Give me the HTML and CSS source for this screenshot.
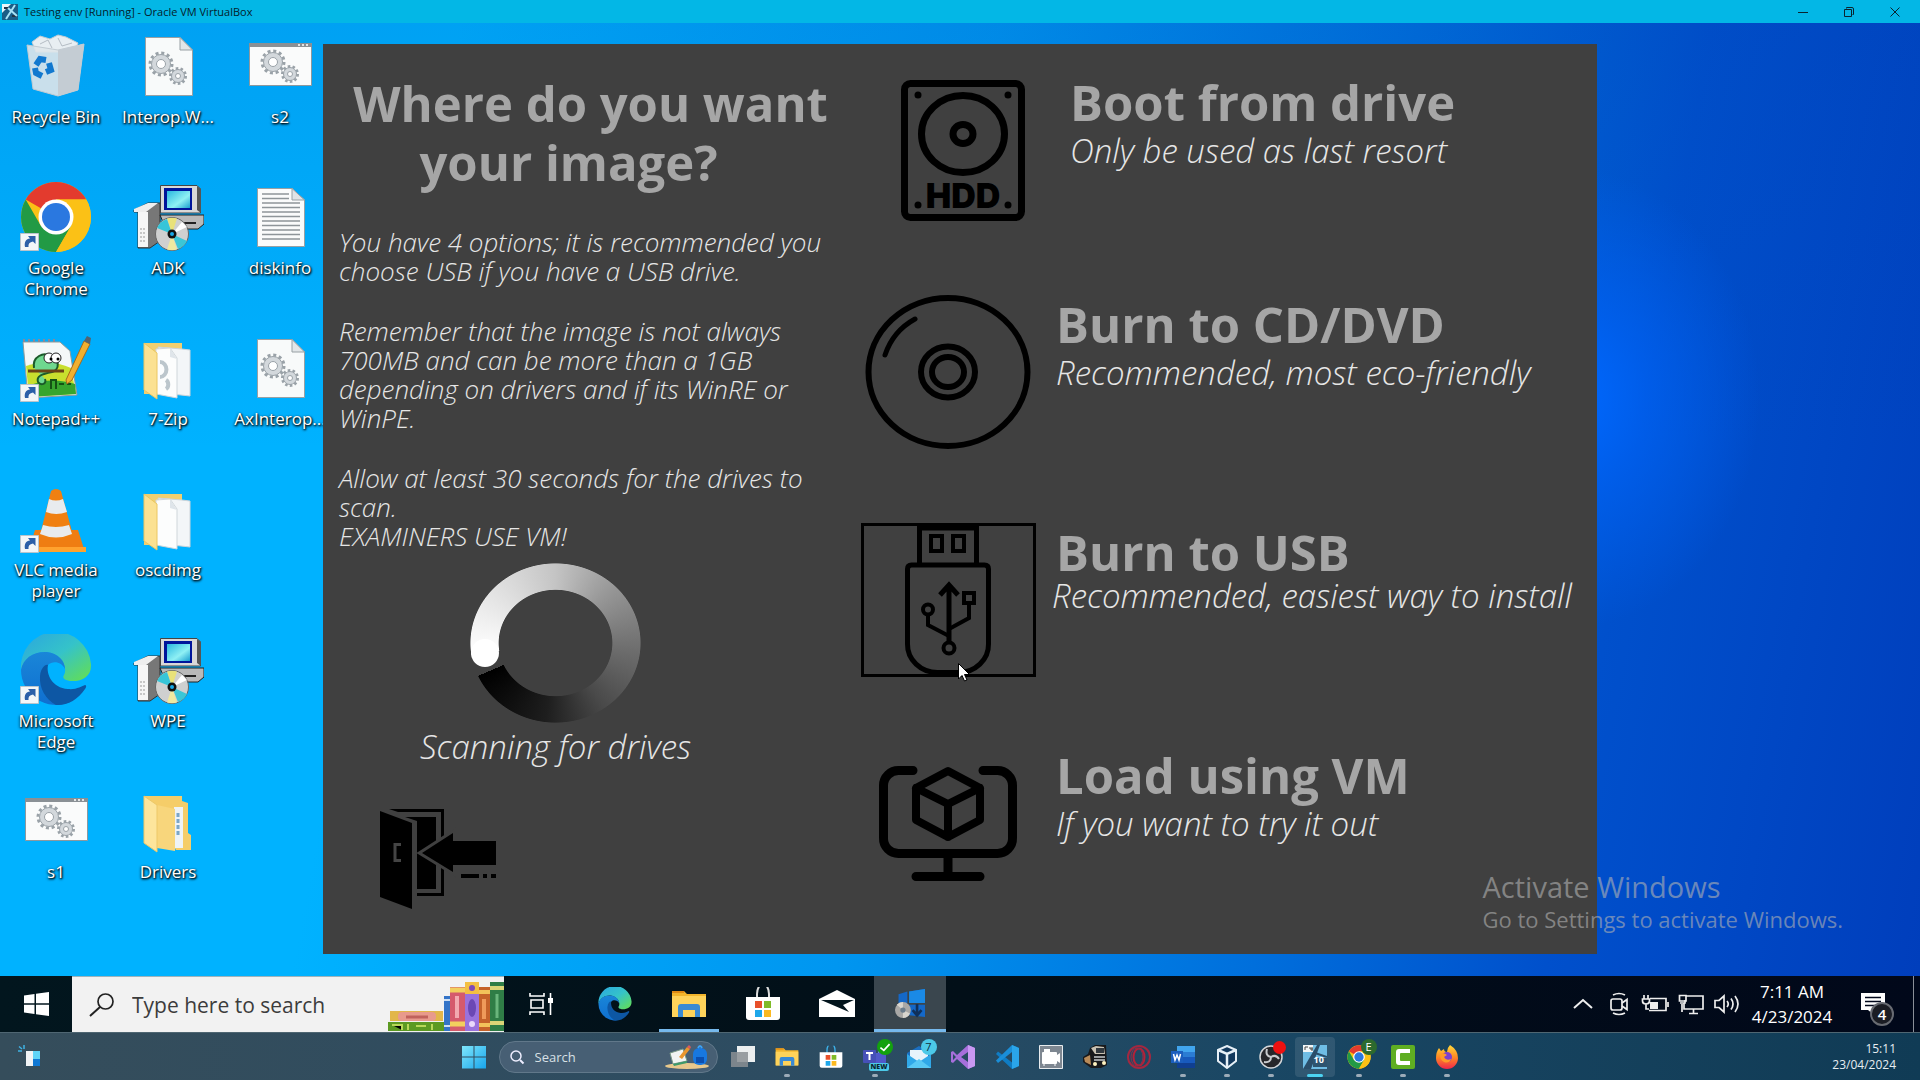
FILE: index.html
```html
<!DOCTYPE html>
<html lang="en">
<head>
<meta charset="utf-8">
<title>Testing env [Running] - Oracle VM VirtualBox</title>
<link rel="stylesheet" href="styles.css">
</head>
<body>
<svg class="defs" aria-hidden="true">
  <defs>
    <linearGradient id="edgeTop" x1="0" y1="0" x2="1" y2="1"><stop offset="0" stop-color="#2aa5e0"/><stop offset=".5" stop-color="#35c3c9"/><stop offset="1" stop-color="#66e04c"/></linearGradient>
    <linearGradient id="edgeMid" x1="0" y1="0" x2="0" y2="1"><stop offset="0" stop-color="#1a86d8"/><stop offset="1" stop-color="#0f6fd0"/></linearGradient>
    <linearGradient id="screen" x1="0" y1="0" x2="1" y2="1"><stop offset="0" stop-color="#29b8e0"/><stop offset=".6" stop-color="#8ff0f4"/><stop offset="1" stop-color="#1a9fd0"/></linearGradient>
    <linearGradient id="win11" x1="0" y1="0" x2="1" y2="1"><stop offset="0" stop-color="#7fe6fb"/><stop offset="1" stop-color="#18a5ec"/></linearGradient>
    <linearGradient id="fire" x1="0" y1="0" x2="0" y2="1"><stop offset="0" stop-color="#ffd83a"/><stop offset=".5" stop-color="#ff8a24"/><stop offset="1" stop-color="#f0264c"/></linearGradient>
  </defs>
  <symbol id="gears" viewBox="0 0 40 34">
    <circle cx="13" cy="13" r="11" fill="none" stroke="#9aa2a8" stroke-width="3" stroke-dasharray="3 2.75"/>
    <circle cx="13" cy="13" r="9.5" fill="#d3d8dc" stroke="#9aa2a8"/>
    <circle cx="13" cy="13" r="4.5" fill="#fff" stroke="#9aa2a8"/>
    <circle cx="30" cy="25" r="7.500" fill="none" stroke="#9aa2a8" stroke-width="3" stroke-dasharray="2.500 2.200"/>
    <circle cx="30" cy="25" r="6.5" fill="#d3d8dc" stroke="#9aa2a8"/>
    <circle cx="30" cy="25" r="2.500" fill="#fff" stroke="#9aa2a8"/>
  </symbol>
  <symbol id="dll" viewBox="0 0 72 72">
    <path d="M13.500 7.500H48L60.500 20V65.500H13.500z" fill="#f8fafa" stroke="#98a0a4"/>
    <path d="M48 7.500V20H60.500z" fill="#e2e6e8" stroke="#98a0a4"/>
    <use href="#gears" x="16" y="21" width="40" height="34"/>
  </symbol>
  <symbol id="script" viewBox="0 0 72 72">
    <path d="M5.500 13.500H67.500V55.500H5.500z" fill="#fafbfb" stroke="#8d989e"/>
    <path d="M5 13H68V17H5z" fill="#8a9095"/><path d="M54 15h2m2 0h2m2 0h2" stroke="#fff" stroke-width="1.500"/>
    <use href="#gears" x="16" y="19" width="40" height="34"/>
  </symbol>
  <symbol id="textfile" viewBox="0 0 72 72">
    <path d="M13.500 7.500H48L60.500 19V65.500H13.500z" fill="#fafbfb" stroke="#98a0a4"/>
    <path d="M48 7.500V19H60.500z" fill="#dfe3e6" stroke="#98a0a4"/>
    <path d="M18 13h27M18 17.500h27M18 22h38M18 26.500h38M18 31h38M18 35.500h38M18 40h38M18 44.500h38M18 49h38M18 53.500h38M18 58h38" stroke="#8e9599" stroke-width="1.300"/>
  </symbol>
  <symbol id="installer" viewBox="0 0 72 72">
    <path d="M2 29L16 22H28V60L18 67H6V31H2z" fill="#777" stroke="#333"/>
    <path d="M2 28L16 22H26L14 31H2z" fill="#eee"/><path d="M6 31H16V66H6z" fill="#f6f6f6"/>
    <path d="M8 48h6M8 52h6M8 56h6M8 60h6" stroke="#999" stroke-dasharray="2 1"/>
    <path d="M28 34H72V43L66 48H34z" fill="#b9b9b9" stroke="#222"/><path d="M48 42H64" stroke="#222" stroke-width="2"/>
    <path d="M28.500 4.500H65L68.500 8V32H28.500z" fill="#d8d8d8" stroke="#444"/><path d="M65 5L69 8V32L65 29z" fill="#555"/>
    <path d="M32 7H60V29H32z" fill="#00149a"/><path d="M35 10H58V27H35z" fill="url(#screen)"/>
    <circle cx="40" cy="53" r="16.500" fill="#cfd0d0" stroke="#666"/>
    <path d="M40 53L35 37.500A16 16 0 0 1 45 37.500z" fill="#e9e27a"/><path d="M40 53L25 47A16 16 0 0 1 35 38z" fill="#37c5d8"/>
    <path d="M40 53L45 68.500A16 16 0 0 1 35 68.500z" fill="#efe9a0"/><path d="M40 53L55 60A16 16 0 0 1 46 68z" fill="#3cc6d6"/>
    <path d="M40 53L50 41 55 46z" fill="#fff"/><circle cx="40" cy="53" r="4.500" fill="#111"/><circle cx="40" cy="53" r="2" fill="#18a8e8"/>
  </symbol>
  <symbol id="folder" viewBox="0 0 72 72">
    <path d="M12 11H50V62H12z" fill="#f0cf70"/>
    <path d="M26 15L50 17 58 18V64L40 62z" fill="#f3f6f8" stroke="#ccd4da"/>
    <path d="M24 17L38 16 45 26V66L24 62z" fill="#fcfdfd" stroke="#d0d6da"/>
    <path d="M38 16V25L45 27z" fill="#dfe5ea"/>
    <path d="M12 11L25 21V67L12 58z" fill="#fbe192" stroke="#eac662"/>
  </symbol>
  <symbol id="shortcut" viewBox="0 0 72 72">
    <path d="M.5 52.500H18.500V69.500H.5z" fill="#f3f6f8" stroke="#b9c4cc"/>
    <path d="M5 66C4 61 6 58 10 57.500L8 55H15.500V63L13 60.500C9.500 61 8 63 8.500 66z" fill="#2b5fa8"/>
  </symbol>
  <symbol id="chrome" viewBox="0 0 72 72">
    <circle cx="36" cy="36" r="35" fill="#fbc116"/>
    <path d="M36 36L5.700 18.500A35 35 0 0 1 66.300 18.500H36z" fill="#e33b2e"/>
    <path d="M5.700 18.500A35 35 0 0 0 36 71L51.200 44.800 20.800 44.800z" fill="#229a45"/>
    <path d="M66.300 18.500H36L51.200 44.800 36 71A35 35 0 0 0 66.300 18.500z" fill="#fbc116"/>
    <circle cx="36" cy="36" r="17.500" fill="#fff"/><circle cx="36" cy="36" r="14" fill="#2a78e0"/>
  </symbol>
  <symbol id="edge" viewBox="0 0 72 72">
    <path d="M1 36A35 35 0 0 1 71 30C72 42 62 48 50 47C44 46 42 44 44 41C48 34 42 20 27 18C15 17 4 24 1 36z" fill="url(#edgeTop)"/>
    <path d="M1 36C3 24 14 17 27 18C38 19 45 27 45 35C42 28 33 26 28 31C22 38 25 57 41 66C45 68 50 69 50 68A35 35 0 0 1 1 36z" fill="url(#edgeMid)"/>
    <path d="M20 42C21 34 25 30 28 31C26 40 32 54 48 55C56 56 62 52 65 51C67 51 66 54 65 55C58 66 46 72 36 71C26 66 19 54 20 42z" fill="#0d57a4"/>
  </symbol>
  <symbol id="explorer" viewBox="0 0 36 30">
    <path d="M1 2H13L16 5H35V27H1z" fill="#f3b52c"/><path d="M1 7H35V28H1z" fill="#ffd35a"/><path d="M1 2H13V4H1z" fill="#e08a14"/>
    <path d="M7 28V18Q7 15 10 15H26Q29 15 29 18V28H24V21H12V28z" fill="#3a8ad4"/>
  </symbol>
  <symbol id="bag" viewBox="0 0 36 34">
    <path d="M12 12V7a3 5 0 0 1 12 0V12" fill="none" stroke="currentColor" stroke-width="2"/>
    <path d="M1 10H35V30Q35 33 32 33H4Q1 33 1 30z" fill="#fff"/>
    <path d="M10 14H17V21H10z" fill="#e8502a"/><path d="M19 14H26V21H19z" fill="#80bb28"/><path d="M10 23H17V30H10z" fill="#1ea7ea"/><path d="M19 23H26V30H19z" fill="#fbb920"/>
  </symbol>
</svg>

<header class="titlebar">
  <svg class="titlebar-icon" viewBox="0 0 16 16"><path d="M0 0H16V16H0z" fill="#1a5d86"/><path d="M0 0H9L0 9z" fill="#e9f4f8"/><path d="M2 4h5M10 12h5" stroke="#234" stroke-width="2"/><path d="M4 15L13 1M6 4l9 8" stroke="#a8e2f5" stroke-width="2"/></svg>
  <h2 class="titlebar-text">Testing env [Running] - Oracle VM VirtualBox</h2>
  <div class="window-controls">
    <button aria-label="Minimize"><svg viewBox="0 0 12 12"><path d="M1 6.500H11"/></svg></button>
    <button aria-label="Restore"><svg viewBox="0 0 12 12"><path d="M3.500 2.500V1.500H9Q10.500 1.500 10.500 3V8.500H9.500M1.500 3.500H8.500V10.500H1.500z"/></svg></button>
    <button aria-label="Close"><svg viewBox="0 0 12 12"><path d="M1.500 1.500L10.500 10.500M10.500 1.500L1.500 10.500"/></svg></button>
  </div>
</header>

<main class="desktop">
  <nav class="shortcuts" aria-label="Desktop icons">
    <button class="shortcut"><svg viewBox="0 0 72 72"><path d="M12 12L20 6 30 9 38 5 46 7 58 13 54 22H16z" fill="#e8eef2" stroke="#c4ccd2"/><path d="M20 14L28 10 32 18M38 8L42 16 52 13" stroke="#b4bcc4" fill="none"/><path d="M7 15L38 20 64 14 58 60 38 66 13 59z" fill="#dfe5ea" fill-opacity=".9" stroke="#c2cbd2"/><path d="M38 20L64 14 58 60 38 66z" fill="#c4ccd3"/><path d="M16 35L20 29 26 30M29 33L31 40 26 42M22 46L16 43 15 38" fill="none" stroke="#1279cf" stroke-width="6"/></svg><span>Recycle Bin</span></button>
    <button class="shortcut"><svg viewBox="0 0 72 72"><use href="#chrome"/><use href="#shortcut"/></svg><span>Google Chrome</span></button>
    <button class="shortcut"><svg viewBox="0 0 72 72"><path d="M3 10H40L50 19 57 63 8 66z" fill="#f4f8f8" stroke="#8e9a9a"/><path d="M6 34Q30 26 51 36L56 62 9 65z" fill="#c8df2e"/><path d="M8 54Q30 44 55 52L56 62 9 65z" fill="#37a52e"/><path d="M4 10v-3M9 10v-3M14 10v-3M19 10v-3M24 10v-3M29 10v-3M34 10v-3" stroke="#889" stroke-width="2"/><path d="M14 36C12 24 24 20 30 24C40 26 40 38 32 40C22 42 16 44 18 50C21 54 27 52 25 47" fill="#6fd88f" stroke="#1b5a2a" stroke-width="2"/><circle cx="29" cy="26" r="5" fill="#fff" stroke="#222"/><circle cx="36" cy="26" r="5" fill="#fff" stroke="#222"/><circle cx="31" cy="27" r="1.500"/><circle cx="38" cy="27" r="1.500"/><path d="M8 39H44" stroke="#6b4316" stroke-width="3"/><path d="M31 57v-9h5v9M39 52h5m3 0h4" fill="none" stroke="#145214" stroke-width="2"/><path d="M46 48L64 9 70 12 52 48 47 52z" fill="#f0b030" stroke="#a8691a"/><path d="M64 9L67 4 71 6 70 12z" fill="#54636f"/><use href="#shortcut"/></svg><span>Notepad++</span></button>
    <button class="shortcut"><svg viewBox="0 0 72 72"><path d="M15 47H58L65 69H8z" fill="#ef7d12"/><path d="M8 64H66V69H8z" fill="#ffa22e"/><path d="M31 8Q36 4 41 8L53 52Q36 60 20 52z" fill="#f08012"/><path d="M29 16Q36 19 43 16L47 29Q36 33 26 29zM23 42Q36 46 49 42L52 51Q36 58 20 51z" fill="#e8ebee"/><use href="#shortcut"/></svg><span>VLC media player</span></button>
    <button class="shortcut"><svg viewBox="0 0 72 72"><use href="#edge"/><use href="#shortcut"/></svg><span>Microsoft Edge</span></button>
    <button class="shortcut"><svg viewBox="0 0 72 72"><use href="#script"/></svg><span>s1</span></button>
    <button class="shortcut"><svg viewBox="0 0 72 72"><use href="#dll"/></svg><span>Interop.W...</span></button>
    <button class="shortcut"><svg viewBox="0 0 72 72"><use href="#installer"/></svg><span>ADK</span></button>
    <button class="shortcut"><svg viewBox="0 0 72 72"><use href="#folder"/><path d="M28 30a6 7 0 0 1 0 15M34 48a4 5 0 0 1 0 9" fill="none" stroke="#bcc6cc" stroke-width="4"/></svg><span>7-Zip</span></button>
    <button class="shortcut"><svg viewBox="0 0 72 72"><use href="#folder"/></svg><span>oscdimg</span></button>
    <button class="shortcut"><svg viewBox="0 0 72 72"><use href="#installer"/></svg><span>WPE</span></button>
    <button class="shortcut"><svg viewBox="0 0 72 72"><path d="M12 11H50V16L56 18V48L59 50V65H44z" fill="#f5cd69"/><path d="M42 22H51V63H42z" fill="#eef3f7"/><path d="M46 28v24" stroke="#7ba6c8" stroke-width="3" stroke-dasharray="4 2"/><path d="M25 20L43 24V66L25 63z" fill="#f8d67c"/><path d="M12 11L25 20V67L12 58z" fill="#fde59c" stroke="#edc868"/></svg><span>Drivers</span></button>
    <button class="shortcut"><svg viewBox="0 0 72 72"><use href="#script"/></svg><span>s2</span></button>
    <button class="shortcut"><svg viewBox="0 0 72 72"><use href="#textfile"/></svg><span>diskinfo</span></button>
    <button class="shortcut"><svg viewBox="0 0 72 72"><use href="#dll"/></svg><span>AxInterop...</span></button>
  </nav>

  <section class="wizard">
    <div class="intro">
      <h1>Where do you want<span>your image?</span></h1>
      <div class="notes">
        <p>You have 4 options; it is recommended you choose USB if you have a USB drive.</p>
        <p>Remember that the image is not always 700MB and can be more than a 1GB depending on drivers and if its WinRE or WinPE.</p>
        <p>Allow at least 30 seconds for the drives to scan.<br>EXAMINERS USE VM!</p>
      </div>
      <div class="scan" role="status">
        <div class="spinner"></div>
        <p>Scanning for drives</p>
      </div>
      <button class="exit" aria-label="Exit">
        <svg viewBox="0 0 116 100">
          <path d="M9 0H64V87H37V84H61V3H18z"/><path d="M25 8H56V80H37V12z"/>
          <path d="M0 2L32 14V100L0 88z"/><path d="M21 35.500H15V51.500H21" fill="none" stroke="#444" stroke-width="3"/>
          <path d="M42 44L73 24V32H116V56H73V63z" stroke="#404040" stroke-width="6"/><path d="M42 44L73 24V32H116V56H73V63z"/>
          <path d="M81 67H99M103 67H107M111 67H116" stroke="#000" stroke-width="4"/>
        </svg>
      </button>
    </div>
    <div class="options">
      <button class="option option-drive">
        <svg class="option-icon" viewBox="0 0 175 154"><g fill="none" stroke="#000" stroke-width="7"><rect x="29.500" y="10.500" width="117" height="134" rx="6"/><ellipse cx="88" cy="61" rx="41.500" ry="38.500"/><ellipse cx="88" cy="61" rx="10" ry="9.500"/></g><circle cx="43" cy="22" r="3.500"/><circle cx="133" cy="22" r="3.500"/><circle cx="43" cy="132" r="3.500"/><circle cx="133" cy="132" r="3.500"/><text x="88" y="135" class="hdd-text">HDD</text></svg>
        <span class="option-text"><strong>Boot from drive</strong><em>Only be used as last resort</em></span>
      </button>
      <button class="option">
        <svg class="option-icon" viewBox="0 0 175 154"><g fill="none" stroke="#000" stroke-width="6"><ellipse cx="87" cy="77" rx="79.500" ry="74"/><ellipse cx="87" cy="77" rx="27" ry="25.500"/><ellipse cx="87" cy="77" rx="16" ry="15"/><path d="M24 60Q32 36 54 24" stroke-width="5" stroke-linecap="round"/></g></svg>
        <span class="option-text"><strong>Burn to CD/DVD</strong><em>Recommended, most eco-friendly</em></span>
      </button>
      <button class="option option-usb">
        <svg class="option-icon option-icon-focus" viewBox="0 0 175 154"><g fill="none" stroke="#000" stroke-width="5"><path d="M58.500 42V5H115.500V42"/><path d="M46.500 46Q46.500 42 50.500 42H123.500Q127.500 42 127.500 46V121A30 28 0 0 1 97.500 149.500H76.500A30 28 0 0 1 46.500 121z"/><g stroke-width="4"><path d="M70 13H81V28H70zM92 13H103V28H92z"/><path d="M88 62V119M79 72L88 62 97 72" stroke-width="5"/><circle cx="88" cy="125" r="5.500"/><circle cx="67" cy="86.500" r="5"/><path d="M67 92V102L88 113M108 81V95L88 106M103 70H113V80H103z"/></g></g></svg>
        <span class="option-text"><strong>Burn to USB</strong><em>Recommended, easiest way to install</em></span>
        <svg class="cursor" viewBox="0 0 12 19"><path d="M.5.5V16L4 12.500 6.500 18 9 17 6.500 11.500H11.500z" fill="#fff" stroke="#000"/></svg>
      </button>
      <button class="option">
        <svg class="option-icon" viewBox="0 0 175 154"><g fill="none" stroke="#000" stroke-width="9" stroke-linecap="round"><path d="M52 24.500H38A15 15 0 0 0 22.500 39.500V92A15 15 0 0 0 38 107.500H136A15 15 0 0 0 151.500 92V39.500A15 15 0 0 0 136 24.500H122M87 108V130M55 130.500H119"/><path d="M87 25L119 42V74L87 91 55 74V42zM55 42L87 58 119 42M87 58V91" stroke-width="8" stroke-linejoin="round"/></g></svg>
        <span class="option-text"><strong>Load using VM</strong><em>If you want to try it out</em></span>
      </button>
    </div>
  </section>

  <aside class="watermark"><p class="watermark-title">Activate Windows</p><p class="watermark-body">Go to Settings to activate Windows.</p></aside>
</main>

<nav class="guest-bar" aria-label="Guest taskbar">
  <button class="guest-start" aria-label="Start"><svg viewBox="0 0 25 24"><path d="M0 3.500L10.500 2V11.300H0zM12 1.800L25 0V11.300H12zM0 12.700H10.500V22L0 20.500zM12 12.700H25V24L12 22.200z" fill="#fff"/></svg></button>
  <div class="guest-search">
    <svg class="guest-lens" viewBox="0 0 26 24"><circle cx="16.500" cy="8.500" r="7.500" fill="none" stroke="#222" stroke-width="1.700"/><path d="M11 14L1 23" stroke="#222" stroke-width="2"/></svg>
    <input type="text" placeholder="Type here to search" aria-label="Type here to search">
    <svg class="books" viewBox="0 0 116 50">
      <path d="M0 40H56V49H0z" fill="#5c9a22"/><path d="M4 43h10v5M20 42v6M28 44h10M44 42v6" stroke="#b8d858" stroke-width="2"/>
      <path d="M2 29H55V39H2z" fill="#e2b64a"/><rect x="10" y="30" width="38" height="9" rx="4" fill="#e89a8c"/><path d="M18 35H40" stroke="#c0625c" stroke-width="3"/>
      <path d="M56 14H62V49H56z" fill="#3474c8"/><path d="M56 18h6M56 44h6" stroke="#cfe0f4" stroke-width="2"/>
      <path d="M62 5H77V49H62z" fill="#d55a6c"/><path d="M62 8h15M62 42h15" stroke="#f2cf5e" stroke-width="5"/><path d="M67 14h4v22h-4z" fill="#f2a9b0"/>
      <path d="M77 0H91V49H77z" fill="#9a72dc"/><path d="M77 0H91V12H77z" fill="#f4bf42"/><circle cx="84" cy="6" r="3" fill="#7f4aba"/><ellipse cx="84" cy="26" rx="4" ry="9" fill="#6b48b4"/><circle cx="84" cy="42" r="3" fill="#e9d8fa"/>
      <path d="M91 5H102V49H91z" fill="#c5622a"/><path d="M91 10h11M91 43h11" stroke="#f2c25a" stroke-width="4"/><path d="M96 17v20" stroke="#ef9a5a" stroke-width="4"/>
      <path d="M102 0H116V49H102z" fill="#2f7d46"/><path d="M102 6h14M102 41h14" stroke="#dbd477" stroke-width="4"/><path d="M109 12v24" stroke="#6ab67c" stroke-width="3"/>
    </svg>
  </div>
  <div class="guest-apps">
    <button aria-label="Task View"><svg class="ic-26" viewBox="0 0 26 24"><g fill="none" stroke="#fff" stroke-width="1.600"><path d="M2 1V4H16V1M3 8H15V16H3zM2 23V20H16V23M22.500 1V23"/></g><path d="M20 6H25V11H20z" fill="#fff"/></svg></button>
    <button aria-label="Edge"><svg class="ic-36" viewBox="0 0 72 72"><use href="#edge"/></svg></button>
    <button class="is-open" aria-label="File Explorer"><svg class="ic-36" viewBox="0 0 36 30"><use href="#explorer"/></svg></button>
    <button class="ic-white" aria-label="Store"><svg class="ic-36" viewBox="0 0 36 34"><use href="#bag"/></svg></button>
    <button aria-label="Mail"><svg class="ic-36" viewBox="0 0 36 30"><path d="M0 10L18 1 36 10V28H0z" fill="#fff"/><path d="M2 11H35L24 16 30 23 2 11z" fill="#02141c"/></svg></button>
    <button class="is-active" aria-label="Image builder"><svg class="ic-32" viewBox="0 0 36 34"><path d="M5 7L15 4V17H5zM17 4L35 1V17H17zM5 19H15V32L5 30zM17 19H35V33L17 31z" fill="#1468c8"/><path d="M17 4L35 1V17H17z" fill="#1a8ae6"/><circle cx="10" cy="25" r="9" fill="#a9a8a6"/><path d="M10 25L3 19A9 9 0 0 1 10 16zM10 25L18 29A9 9 0 0 1 10 34z" fill="#d8d5ce"/><circle cx="10" cy="25" r="3" fill="#6a7c8c"/><path d="M26 18V30M21 25L26 31 31 25" fill="none" stroke="#10305a" stroke-width="3"/></svg></button>
  </div>
  <div class="guest-tray">
    <button aria-label="Show hidden icons"><svg viewBox="0 0 28 24"><path d="M5 16L14 8 23 16" fill="none" stroke="#eee" stroke-width="2"/></svg></button>
    <button aria-label="Meet Now"><svg viewBox="0 0 28 24"><g fill="none" stroke="#eee" stroke-width="1.700"><path d="M8 3Q14 0 20 3M8 21Q14 24 20 21"/><rect x="6" y="7" width="11" height="11" rx="2"/><path d="M17 11L22 7.500V17.500L17 14"/></g></svg></button>
    <button aria-label="Battery"><svg viewBox="0 0 28 24"><g fill="none" stroke="#eee" stroke-width="1.700"><path d="M9 6.500H25V18.500H8M27 10V15M3 3V7M7 3V7M1.500 7H8.500V9Q8.500 12 5 12Q1.500 12 1.500 9zM5 12V17H8"/></g><path d="M9 10H17V17H9z" fill="#eee"/></svg></button>
    <button aria-label="Network"><svg viewBox="0 0 28 24"><g fill="none" stroke="#eee" stroke-width="1.700"><path d="M9 4H26V17H7V11M12 21.500H21M16.500 17V21M3 11H8V8M2.500 3.500H9V9H2.500zM5 12V20"/></g></svg></button>
    <button aria-label="Volume"><svg viewBox="0 0 28 24"><g fill="none" stroke="#eee" stroke-width="1.700"><path d="M2 8.500H6L11 4V20L6 15.500H2zM14 9Q16.500 12 14 15M18 6.500Q22 12 18 17.500M22 4Q28 12 22 20"/></g></svg></button>
    <button class="guest-clock"><span>7:11 AM</span><span>4/23/2024</span></button>
    <button class="notifications" aria-label="Notifications"><svg viewBox="0 0 24 22"><path d="M0 0H24V17H13V22L7 17H0z" fill="#fff"/><path d="M4 4.500H20M4 8.500H20M4 12.500H14" stroke="#02081c" stroke-width="1.500"/></svg><span class="count">4</span></button>
    <span class="peek"></span>
  </div>
</nav>

<nav class="host-bar" aria-label="Host taskbar">
  <div class="host-left"><button class="host-app" aria-label="Widgets"><svg viewBox="0 0 24 24"><path d="M8 6H15V21H8z" fill="#f0f3f5"/><path d="M15 6H22V14H15z" fill="#5fd4f7"/><path d="M15 14H22V21H15z" fill="#0f78d4"/><path d="M6 0V4M0 6H4M1 1.500L4 4" stroke="#3fb2e4" stroke-width="1.500"/></svg></button></div>
  <div class="host-center">
    <button class="host-app" aria-label="Start"><svg viewBox="0 0 24 24"><path d="M0 1H11.500V11.500H0zM12.500 1H24V11.500H12.500zM0 12.500H11.500V23.500H0zM12.500 12.500H24V23.500H12.500z" fill="url(#win11)"/></svg></button>
    <div class="host-search">
      <svg class="host-lens" viewBox="0 0 16 16"><circle cx="7" cy="7" r="5" fill="none" stroke="#eef" stroke-width="1.500"/><path d="M11 11L14.500 14.500" stroke="#eef" stroke-width="2"/></svg>
      <input type="text" placeholder="Search" aria-label="Search">
      <svg class="school" viewBox="0 0 46 24"><ellipse cx="22" cy="21" rx="22" ry="3" fill="#e8c88c"/><path d="M5 8L18 4 22 16 8 19z" fill="#f2f4f2" stroke="#7a9a86"/><path d="M8 19L22 16V18L9 21z" fill="#3d9a6a"/><path d="M14 12L22 2 25 4 17 14z" fill="#e8962e"/><path d="M22 2L24 0 26 2 25 4z" fill="#e05a5a"/><rect x="28" y="3" width="14" height="17" rx="6" fill="#1878e0"/><path d="M31 12H39V18H31z" fill="#0c4fb0"/><path d="M33 3Q35-1 37 3" fill="none" stroke="#3ea2f5" stroke-width="2"/></svg>
    </div>
    <div class="host-apps">
      <button class="host-app" aria-label="Task View"><svg viewBox="0 0 24 24"><path d="M6 1H24V17H6z" fill="#eceff0"/><path d="M0 7H17V22H0z" fill="#8b8f94" fill-opacity=".85"/></svg></button>
      <button class="host-app is-running" aria-label="File Explorer"><svg viewBox="0 0 36 30"><use href="#explorer"/></svg></button>
      <button class="host-app ic-blue" aria-label="Store"><svg viewBox="0 0 36 34"><use href="#bag"/></svg></button>
      <button class="host-app is-running" aria-label="Teams"><svg viewBox="0 0 24 24"><circle cx="19" cy="8" r="4" fill="#7b83eb"/><rect x="8" y="8" width="15" height="12" rx="3" fill="#5059c9"/><rect x="0" y="5" width="13" height="13" rx="1" fill="#4650b8"/><path d="M3 8H10M6.500 8V15" stroke="#fff" stroke-width="2"/></svg><span class="badge badge-ok"><svg viewBox="0 0 14 14"><path d="M3 7.500L6 10 11 4.500" fill="none" stroke="#fff" stroke-width="1.500"/></svg></span><span class="tag">NEW</span></button>
      <button class="host-app" aria-label="Mail"><svg viewBox="0 0 24 24"><path d="M0 8L12 1 24 8V23H0z" fill="#1b6fc0"/><path d="M3 5H21V16H3z" fill="#e6f3fb"/><path d="M0 9L12 17 24 9V23H0z" fill="#30a8e8"/><path d="M0 23L12 14 24 23z" fill="#58c8f4"/></svg><span class="badge badge-count">7</span></button>
      <button class="host-app" aria-label="Visual Studio"><svg viewBox="0 0 24 24"><path d="M17 0L24 3V21L17 24 6 14 2 18 0 17V7L2 6 6 10zM17 7L10 12 17 17zM2 9V15L5 12z" fill="#a66fdb" fill-rule="evenodd"/><path d="M17 0L24 3V21L17 24z" fill="#c998f2"/></svg></button>
      <button class="host-app" aria-label="Visual Studio Code"><svg viewBox="0 0 24 24"><path d="M17 0L24 3V21L17 24 1 9 3 6.500 17 17.500z" fill="#0f7cc4"/><path d="M17 0L17 7 3 18 1 15.500z" fill="#1a8ed8"/><path d="M17 0L24 3V21L17 24z" fill="#2aa5ea"/></svg></button>
      <button class="host-app" aria-label="Camera"><svg viewBox="0 0 24 24"><path d="M.5.5H23.500V23.500H.5z" fill="#7e8791" stroke="#e8ecef"/><rect x="3" y="7" width="15" height="12" rx="1" fill="#fff"/><path d="M5 4H11V7H5zM18 10L21 8V18L18 16z" fill="#fff"/><path d="M5 19V21M16 19V21" stroke="#fff"/></svg></button>
      <button class="host-app" aria-label="Truck Simulator"><svg viewBox="0 0 24 24"><path d="M7 3L12 0H23L24 20 18 23H8L0 17V12L5 9z" fill="#18191b"/><path d="M8 3L13 1 21 2 22 9 12 9z" fill="#c8c1b2"/><path d="M13 3H21V8H13z" fill="#31383e"/><path d="M1 13L7 10 8 20 2 17z" fill="#b88a58"/><path d="M11 12H22M11 15H22" stroke="#c5c9cc" stroke-width="1.500"/><circle cx="12" cy="19" r="2" fill="#fff3c0"/><circle cx="21" cy="18" r="2" fill="#fff3c0"/></svg></button>
      <button class="host-app" aria-label="Opera"><svg viewBox="0 0 24 24"><circle cx="12" cy="12" r="11" fill="none" stroke="#a32840" stroke-width="2"/><ellipse cx="12" cy="12" rx="5.500" ry="8.500" fill="none" stroke="#b52038" stroke-width="2"/><ellipse cx="10" cy="12" rx="6" ry="9" fill="none" stroke="#8d3048"/></svg></button>
      <button class="host-app is-running" aria-label="Word"><svg viewBox="0 0 24 24"><path d="M6 1H24V7H6z" fill="#41a5ee"/><path d="M6 7H24V12H6z" fill="#2b7cd3"/><path d="M6 12H24V18H6z" fill="#185abd"/><path d="M6 18H24V23H6z" fill="#103f91"/><path d="M0 6H12V18H0z" fill="#1b5ebe"/><path d="M2.500 9L4 15 6 10 8 15 9.500 9" fill="none" stroke="#fff" stroke-width="1.500"/></svg></button>
      <button class="host-app is-running" aria-label="VirtualBox"><svg viewBox="0 0 24 24"><path d="M12 1L21 5V16L12 23 3 16V5z" fill="#12385c" stroke="#e6eff6" stroke-width="2"/><path d="M3 5L12 9 21 5M12 9V23" stroke="#e6eff6" stroke-width="2.500" fill="none"/></svg></button>
      <button class="host-app is-running" aria-label="OBS Studio"><svg viewBox="0 0 24 24"><circle cx="12" cy="12" r="11" fill="#26262a" stroke="#d4d6d9" stroke-width="1.500"/><path d="M12 12Q6 11 8 4M12 12Q17 9 20 14M12 12Q12 18 5 17" fill="none" stroke="#c8cacd" stroke-width="2"/></svg><span class="badge badge-rec"></span></button>
      <button class="host-app is-selected" aria-label="Virtual machine"><svg viewBox="0 0 24 24"><path d="M0 0H24V24H0z" fill="#5fb6e2"/><path d="M0 0H10V7H0z" fill="#f2f5f6"/><path d="M2 5V2H5M7 2V4H10M9 2V6" stroke="#333" fill="none"/><path d="M0 24L14 0H17L8 24z" fill="#123a5a"/><path d="M12 8L24 12" stroke="#123a5a" stroke-width="2"/><path d="M10 13H24V22H10z" fill="#17415f"/></svg><span class="os-tag">10</span></button>
      <button class="host-app is-running" aria-label="Chrome"><svg viewBox="0 0 72 72"><use href="#chrome"/></svg><span class="badge badge-profile">E</span></button>
      <button class="host-app is-running" aria-label="Camtasia"><svg viewBox="0 0 24 24"><rect width="24" height="24" rx="2" fill="#5fae22"/><path d="M19 4H8Q5 4 5 7V17Q5 20 8 20H19V16H10Q9 16 9 15V9Q9 8 10 8H19z" fill="#fff"/></svg></button>
      <button class="host-app is-running" aria-label="Firefox"><svg viewBox="0 0 24 24"><path d="M15 0Q23 5 23 13A11 11 0 0 1 1 13Q1 7 4 3L6 6 9 4Q9 7 12 7Q12 3 15 0z" fill="url(#fire)"/><circle cx="12" cy="12" r="5" fill="#7b3fd0"/><path d="M5 9Q9 7 12 10L9 12Q11 16 16 14Q14 19 9 17Q5 15 5 9z" fill="#ff9a28"/></svg></button>
    </div>
  </div>
  <div class="host-clock"><span>15:11</span><span>23/04/2024</span></div>
</nav>
</body>
</html>
```
FILE: styles.css
```css
* { box-sizing: border-box; }
body {
  margin: 0;
  min-height: 100vh;
  display: grid;
  grid-template-rows: 23px 1fr 56px 48px;
  font-family: "Open Sans", "Noto Sans", sans-serif;
  overflow: hidden;
}
h1, h2, p { margin: 0; font-weight: inherit; }
button { padding: 0; border: 0; background: none; color: inherit; font: inherit; }
input { min-width: 0; padding: 0; border: 0; background: none; font: inherit; color: inherit; outline: 0; }
input::placeholder { color: inherit; opacity: 1; }
svg { display: block; flex: none; }
.defs { position: absolute; width: 0; height: 0; }

/* VirtualBox window frame */
.titlebar { display: flex; align-items: center; background: #03b7e6; color: #0b2a36; padding-left: 2px; }
.titlebar-icon { width: 16px; height: 16px; }
.titlebar-text { flex: 1; margin-left: 6px; font-size: 11px; line-height: 16px; color: #06222c; }
.window-controls { display: flex; height: 100%; align-items: center; padding-right: 2px; }
.window-controls button { width: 46px; height: 20px; display: grid; place-items: center; }
.window-controls svg { width: 12px; height: 12px; fill: none; stroke: #0a2430; stroke-width: 1; }

/* Guest desktop */
.desktop {
  position: relative;
  background:
    radial-gradient(ellipse 190px 230px at 1570px 375px, #0068ff 0, rgba(0, 98, 245, .7) 40%, rgba(0, 80, 215, 0) 100%),
    linear-gradient(to bottom, rgba(0, 60, 170, .14), rgba(0, 150, 255, 0) 45%),
    linear-gradient(100deg, #00b2ff 0, #00b2ff 22%, #0096f0 48%, #006fdc 68%, #0050cc 82%, #003ebc 100%);
}
.shortcuts {
  display: grid;
  grid-auto-flow: column;
  grid-template-rows: repeat(6, 151px);
  grid-auto-columns: 112px;
  justify-content: start;
  padding-top: 7px;
}
.shortcut {
  display: flex;
  flex-direction: column;
  align-items: center;
  gap: 4px;
  color: #fff;
  font-size: 17px;
  line-height: 21px;
  text-shadow: 1px 1px 2px #000, 0 1px 3px #000;
}
.shortcut svg { width: 72px; height: 72px; }
.shortcut span { max-width: 96px; }

/* Image wizard window */
.wizard {
  position: absolute;
  inset: 21px 323px 22px;
  display: grid;
  grid-template-columns: 42% 1fr;
  background: #404040;
  color: #e6e6e6;
}
.intro { padding: 30px 0 0 16px; }
.intro h1 { margin-right: 16px; text-align: center; font-weight: 700; font-size: 49px; line-height: 59px; color: #a6a6a6; }
.intro h1 span { display: block; padding-right: 44px; }
.notes { display: grid; gap: 31px; margin: 36px 16px 12px 0; font-size: 26px; line-height: 29px; font-style: italic; font-weight: 300; }
.scan { display: grid; justify-items: center; gap: 4px; padding-right: 86px; font-size: 33px; line-height: 40px; font-style: italic; font-weight: 300; }
.spinner { position: relative; width: 171px; height: 160px; }
.spinner::before {
  content: "";
  position: absolute;
  inset: 0;
  background: conic-gradient(from 262deg, #fff 0, #c4c4c4 98deg, #969696 145deg, #6c6c6c 195deg, #4a4a4a 240deg, #1e1e1e 285deg, #000 345deg, transparent 345deg);
  mask: radial-gradient(closest-side, transparent 66%, #000 67%, #000 99%, transparent 100%);
}
.spinner::after { content: ""; position: absolute; left: 1px; top: 76px; width: 28px; height: 28px; border-radius: 50%; background: #fff; }
.exit { display: block; margin: 42px 0 0 41px; }
.exit svg { width: 116px; height: 100px; }

.options { display: grid; grid-template-rows: 222px 228px 223px auto; align-content: start; padding: 29px 0 0 3px; }
.option { position: relative; display: flex; align-items: flex-start; gap: 20px; text-align: left; }
.option-drive { padding-left: 14px; }
.option-usb { gap: 16px; }
.option-icon { width: 175px; height: 154px; }
.option-icon-focus { outline: 3px solid #000; outline-offset: -3px; }
.hdd-text { font: 900 34px Inter, sans-serif; text-anchor: middle; }
.option-text { display: flex; flex-direction: column; white-space: nowrap; }
.option-text strong { font-weight: 700; font-size: 49px; line-height: 59px; color: #a6a6a6; }
.option-text em { font-weight: 300; font-size: 33px; line-height: 38px; }
.option-usb strong { padding-left: 4px; }
.option-usb em { margin-top: -5px; }
.cursor { position: absolute; left: 97px; top: 140px; width: 12px; height: 19px; }

.watermark { position: absolute; right: 77px; bottom: 43px; color: rgba(178, 178, 178, .6); pointer-events: none; }
.watermark-title { font-size: 29px; line-height: 36px; }
.watermark-body { font-size: 22px; line-height: 28px; }

/* Guest taskbar */
.guest-bar { display: flex; background: linear-gradient(to right, #02161e, #020f18 50%, #01081a); color: #fff; }
.guest-start { width: 72px; display: grid; place-items: center; }
.guest-start svg { width: 25px; height: 24px; }
.guest-search { display: flex; align-items: center; width: 432px; padding-left: 17px; background: #f2f2f2; color: #3c3c3c; border-top: 1px solid #9db4bd; }
.guest-lens { width: 26px; height: 24px; margin-right: 17px; }
.guest-search input { flex: 1; font-size: 21px; line-height: 28px; }
.books { width: 116px; height: 50px; align-self: flex-end; }
.guest-apps { display: flex; }
.guest-apps button { width: 74px; display: grid; place-items: center; }
.guest-apps .is-open { background: linear-gradient(#76b9ed, #76b9ed) center bottom / 60px 3px no-repeat; }
.guest-apps .is-active { width: 72px; background: #3a464e; border-bottom: 3px solid #76b9ed; }
.ic-26 { width: 26px; height: 24px; }
.ic-32 { width: 32px; height: 30px; }
.ic-36 { width: 36px; height: 34px; }
.ic-white { color: #ddd; }
.ic-blue { color: #3db2ea; }
.guest-tray { display: flex; align-items: center; margin-left: auto; }
.guest-tray button { padding: 0 4px; }
.guest-tray svg { width: 28px; height: 24px; }
.guest-tray .guest-clock { display: grid; width: 80px; padding: 0; margin-left: 7px; font-size: 17px; line-height: 25px; text-align: center; justify-content: center; }
.guest-tray .notifications { position: relative; width: 81px; padding: 0; display: grid; place-items: center; }
.guest-tray .notifications svg { width: 24px; height: 22px; }
.count { position: absolute; left: 38px; top: 9px; width: 24px; height: 24px; border-radius: 50%; border: 2px solid #686b72; background: #1b1d24; font-size: 15px; line-height: 20px; font-weight: 600; text-align: center; }
.peek { align-self: stretch; width: 7px; border-left: 1px solid #8a8f98; }

/* Host taskbar */
.host-bar { display: grid; grid-template-columns: 1fr auto 1fr; background: linear-gradient(to right, #354d5b, #2c4c62 45%, #1a4764 65%, #103b55); border-top: 1px solid #4f6672; color: #fff; }
.host-left { display: flex; padding-left: 8px; }
.host-center { display: flex; align-items: center; gap: 3px; }
.host-apps { display: flex; }
.host-app { position: relative; width: 44px; height: 47px; display: grid; place-items: center; }
.host-app > svg { width: 24px; height: 24px; }
.host-search { display: flex; align-items: center; width: 219px; height: 32px; padding: 0 6px 0 9px; border: 1px solid #61788a; border-radius: 16px; background: #475f74; color: #d8e0e6; }
.host-lens { width: 16px; height: 16px; margin-right: 10px; }
.host-search input { flex: 1; font-size: 13px; line-height: 18px; }
.school { width: 46px; height: 24px; }
.is-running::after, .is-selected::after { content: ""; position: absolute; left: 19px; bottom: 3px; width: 6px; height: 3px; border-radius: 2px; background: #9cabb8; }
.is-selected::before { content: ""; position: absolute; inset: 4px 2px 3px; border-radius: 4px; background: rgba(255, 255, 255, .1); }
.is-selected::after { left: 14px; width: 16px; background: #4cd3f2; }
.badge { position: absolute; left: 24px; top: 6px; width: 16px; height: 16px; border-radius: 50%; font-size: 11px; line-height: 16px; text-align: center; }
.badge-ok { background: #13a10e; }
.badge-ok svg { width: 16px; height: 16px; }
.badge-count { background: #4cc9e8; color: #10303c; }
.badge-rec { top: 8px; width: 13px; height: 13px; background: #ee1111; }
.badge-profile { background: #2c6a2e; }
.tag { position: absolute; left: 16px; bottom: 9px; padding: 0 2px; border-radius: 2px; background: #4cc9e8; color: #0c2830; font-size: 7px; line-height: 8px; font-weight: 800; }
.os-tag { position: absolute; left: 21px; top: 21px; font-size: 9px; line-height: 12px; font-weight: 700; }
.host-clock { display: flex; flex-direction: column; justify-content: center; align-items: flex-end; padding-right: 24px; font-size: 12px; line-height: 16px; color: #e6edf2; }
```
